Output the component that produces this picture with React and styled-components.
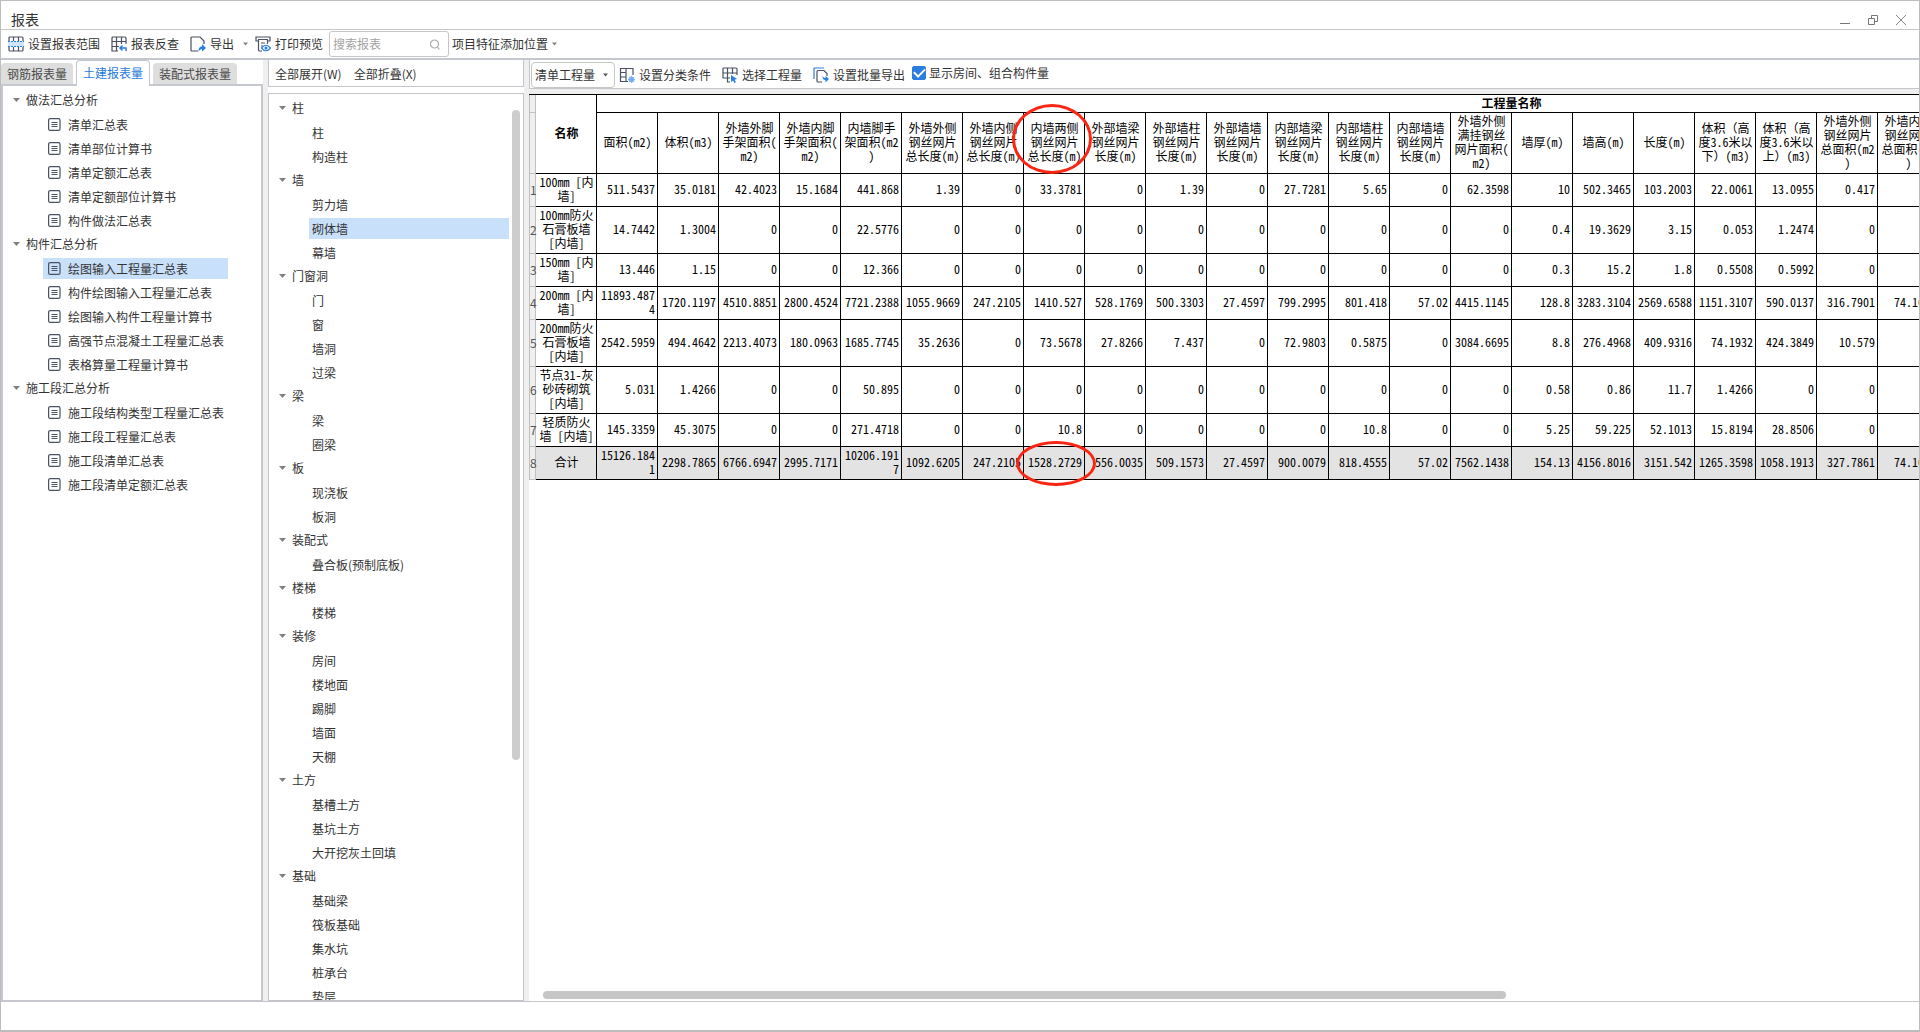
import { useState } from 'react';
import styled, { createGlobalStyle } from 'styled-components';

const reportGroups = [
    {
        title: '做法汇总分析',
        items: ['清单汇总表', '清单部位计算书', '清单定额汇总表', '清单定额部位计算书', '构件做法汇总表'],
    },
    {
        title: '构件汇总分析',
        items: ['绘图输入工程量汇总表', '构件绘图输入工程量汇总表', '绘图输入构件工程量计算书', '高强节点混凝土工程量汇总表', '表格算量工程量计算书'],
    },
    {
        title: '施工段汇总分析',
        items: ['施工段结构类型工程量汇总表', '施工段工程量汇总表', '施工段清单汇总表', '施工段清单定额汇总表'],
    },
];

const componentGroups = [
    { title: '柱', items: ['柱', '构造柱'] },
    { title: '墙', items: ['剪力墙', '砌体墙', '幕墙'] },
    { title: '门窗洞', items: ['门', '窗', '墙洞', '过梁'] },
    { title: '梁', items: ['梁', '圈梁'] },
    { title: '板', items: ['现浇板', '板洞'] },
    { title: '装配式', items: ['叠合板(预制底板)'] },
    { title: '楼梯', items: ['楼梯'] },
    { title: '装修', items: ['房间', '楼地面', '踢脚', '墙面', '天棚'] },
    { title: '土方', items: ['基槽土方', '基坑土方', '大开挖灰土回填'] },
    { title: '基础', items: ['基础梁', '筏板基础', '集水坑', '桩承台', '垫层'] },
];

const columns = [
    '面积(m2)', '体积(m3)', '外墙外脚手架面积(m2)', '外墙内脚手架面积(m2)', '内墙脚手架面积(m2)',
    '外墙外侧钢丝网片总长度(m)', '外墙内侧钢丝网片总长度(m)', '内墙两侧钢丝网片总长度(m)',
    '外部墙梁钢丝网片长度(m)', '外部墙柱钢丝网片长度(m)', '外部墙墙钢丝网片长度(m)',
    '内部墙梁钢丝网片长度(m)', '内部墙柱钢丝网片长度(m)', '内部墙墙钢丝网片长度(m)',
    '外墙外侧满挂钢丝网片面积(m2)', '墙厚(m)', '墙高(m)', '长度(m)',
    '体积（高度3.6米以下）(m3)', '体积（高度3.6米以上）(m3)', '外墙外侧钢丝网片总面积(m2)', '外墙内侧钢丝网片总面积(m2)',
];

// the sheet is wider than the window, the last columns stay empty
const totalColumns = 30;

const rows = [
    { name: '100mm [内墙]', values: ['511.5437', '35.0181', '42.4023', '15.1684', '441.868', '1.39', '0', '33.3781', '0', '1.39', '0', '27.7281', '5.65', '0', '62.3598', '10', '502.3465', '103.2003', '22.0061', '13.0955', '0.417', '0'] },
    { name: '100mm防火石膏板墙 [内墙]', values: ['14.7442', '1.3004', '0', '0', '22.5776', '0', '0', '0', '0', '0', '0', '0', '0', '0', '0', '0.4', '19.3629', '3.15', '0.053', '1.2474', '0', '0'] },
    { name: '150mm [内墙]', values: ['13.446', '1.15', '0', '0', '12.366', '0', '0', '0', '0', '0', '0', '0', '0', '0', '0', '0.3', '15.2', '1.8', '0.5508', '0.5992', '0', '0'] },
    { name: '200mm [内墙]', values: ['11893.4874', '1720.1197', '4510.8851', '2800.4524', '7721.2388', '1055.9669', '247.2105', '1410.527', '528.1769', '500.3303', '27.4597', '799.2995', '801.418', '57.02', '4415.1145', '128.8', '3283.3104', '2569.6588', '1151.3107', '590.0137', '316.7901', '74.1633'] },
    { name: '200mm防火石膏板墙 [内墙]', values: ['2542.5959', '494.4642', '2213.4073', '180.0963', '1685.7745', '35.2636', '0', '73.5678', '27.8266', '7.437', '0', '72.9803', '0.5875', '0', '3084.6695', '8.8', '276.4968', '409.9316', '74.1932', '424.3849', '10.579', '0'] },
    { name: '节点31-灰砂砖砌筑 [内墙]', values: ['5.031', '1.4266', '0', '0', '50.895', '0', '0', '0', '0', '0', '0', '0', '0', '0', '0', '0.58', '0.86', '11.7', '1.4266', '0', '0', '0'] },
    { name: '轻质防火墙 [内墙]', values: ['145.3359', '45.3075', '0', '0', '271.4718', '0', '0', '10.8', '0', '0', '0', '0', '10.8', '0', '0', '5.25', '59.225', '52.1013', '15.8194', '28.8506', '0', '0'] },
    { name: '合计', total: true, values: ['15126.1841', '2298.7865', '6766.6947', '2995.7171', '10206.1917', '1092.6205', '247.2105', '1528.2729', '556.0035', '509.1573', '27.4597', '900.0079', '818.4555', '57.02', '7562.1438', '154.13', '4156.8016', '3151.542', '1265.3598', '1058.1913', '327.7861', '74.1633'] },
];

const GlobalStyle = createGlobalStyle`
    * {
        box-sizing: border-box;
    }
    body {
        margin: 0;
        background: #fff;
        color: #333;
        font-family: 'Noto Sans CJK SC', sans-serif;
        font-size: 12px;
        line-height: 20px;
        overflow: hidden;
    }
    button, input, select {
        font: inherit;
        color: inherit;
        margin: 0;
        padding: 0;
        border: 0;
        background: none;
    }
    ul {
        list-style: none;
        margin: 0;
        padding: 0;
    }
`;

const Window = styled.div`
    display: flex;
    flex-direction: column;
    height: 100vh;
    border: 1px solid #bdbdbd;
    border-bottom-width: 2px;
`;

const TitleBar = styled.header`
    display: flex;
    align-items: flex-end;
    justify-content: space-between;
    height: 29px;
    padding: 0 13px 0 10px;
    border-bottom: 1px solid #c4c6c9;
`;

const Title = styled.h1`
    margin: 0;
    font-size: 14px;
    font-weight: 400;
    line-height: 20px;
`;

const WindowButtons = styled.div`
    display: flex;
    gap: 18px;
    padding-bottom: 4px;
    button {
        display: flex;
        width: 10px;
        height: 10px;
    }
`;

const Toolbar = styled.div`
    display: flex;
    align-items: center;
    height: 30px;
    padding-left: 7px;
    border-bottom: 2px solid #c4c8ce;
`;

const ToolButton = styled.button`
    display: flex;
    align-items: center;
    gap: 4px;
    margin-right: ${({ $space }) => $space || 11}px;
    white-space: nowrap;
    svg {
        flex: none;
    }
`;

const CaretButton = styled.button`
    display: flex;
    margin-right: 7px;
`;

const SearchBox = styled.label`
    display: flex;
    align-items: center;
    width: 120px;
    height: 26px;
    margin-right: 3px;
    padding: 0 8px 0 3px;
    border: 1px solid #c6c6c6;
    border-radius: 3px;
    input {
        flex: 1;
        min-width: 0;
        outline: none;
    }
    input::placeholder {
        color: #a3a3a3;
        opacity: 1;
    }
`;

const Main = styled.main`
    flex: 1;
    min-height: 0;
    display: grid;
    grid-template-columns: 262px 256px minmax(0, 1fr);
    grid-template-rows: minmax(0, 1fr);
    column-gap: 5px;
    background: #efefef;
`;

const Column = styled.section`
    display: flex;
    flex-direction: column;
    min-height: 0;
    background: #fff;
`;

const Tabs = styled.div`
    display: flex;
    align-items: flex-end;
    gap: 3px;
    height: 24px;
`;

const Tab = styled.button`
    height: ${({ $active }) => ($active ? 26 : 21)}px;
    margin-bottom: ${({ $active }) => ($active ? -2 : 0)}px;
    padding: ${({ $active }) => ($active ? '0 6px 2px' : '0 6px')};
    border-radius: 4px 4px 0 0;
    border: ${({ $active }) => ($active ? '1px solid #c4c8ce' : '0')};
    border-bottom: 0;
    background: ${({ $active }) => ($active ? '#fff' : '#dedede')};
    color: ${({ $active }) => ($active ? '#1f7ae0' : '#4a4a4a')};
    white-space: nowrap;
    z-index: ${({ $active }) => ($active ? 1 : 0)};
`;

const ReportPanel = styled.nav`
    flex: 1;
    min-height: 0;
    padding-top: 3px;
    border: 2px solid #c6c8d0;
    border-bottom-width: 1px;
    overflow: hidden;
`;

const LinkBar = styled.div`
    display: flex;
    align-items: center;
    flex: none;
    gap: 12px;
    height: 27px;
    margin-bottom: 6px;
    padding: 2px 0 0 6px;
    border: 1px solid #c4c6cc;
    border-top: 0;
`;

const TreePanel = styled.nav`
    flex: 1;
    min-height: 0;
    display: flex;
    border: 1px solid #c4c6cc;
    overflow: hidden;
`;

const TreeArea = styled.div`
    flex: 1;
    padding-top: 3px;
`;

const TrackY = styled.div`
    width: 8px;
    margin: 16px 3px 0 0;
`;

const ThumbY = styled.div`
    height: 73%;
    border-radius: 4px;
    background: #cdcdcd;
`;

const GroupButton = styled.button`
    display: flex;
    align-items: center;
    gap: 6px;
    height: 24px;
    padding: 0 0 2px 10px;
`;

const TreeRow = styled.li`
    display: flex;
    height: 24px;
    padding: 1px 0 2px 40px;
`;

const TreeItem = styled.button`
    display: flex;
    align-items: center;
    gap: 7px;
    width: ${({ $width }) => $width}px;
    padding-left: ${({ $indent }) => $indent}px;
    background: ${({ $active }) => ($active ? '#c9e0fa' : 'transparent')};
    white-space: nowrap;
`;

const SheetToolbar = styled.div`
    display: flex;
    align-items: center;
    flex: none;
    height: 29px;
    padding: 1px 0 0 1px;
    border-left: 1px solid #c4c6cc;
    border-bottom: 1px solid #c4c6cc;
`;

const SelectBox = styled.label`
    display: grid;
    align-items: center;
    width: 84px;
    height: 26px;
    margin-right: 4px;
    border: 1px solid #c6c6c6;
    border-radius: 4px;
    select {
        grid-area: 1 / 1;
        width: 100%;
        height: 24px;
        padding-left: 3px;
        appearance: none;
        outline: none;
    }
    svg {
        grid-area: 1 / 1;
        justify-self: end;
        margin-right: 6px;
        pointer-events: none;
    }
`;

const CheckLabel = styled.label`
    display: flex;
    align-items: center;
    gap: 3px;
    padding-bottom: 3px;
    white-space: nowrap;
`;

const Checkbox = styled.input`
    display: grid;
    place-items: center;
    width: 14px;
    height: 14px;
    border: 1px solid #2a7de1;
    border-radius: 2px;
    appearance: none;
    &:checked {
        background: #2a7de1;
    }
    &:checked::after {
        content: '';
        width: 9px;
        height: 5px;
        margin-bottom: 3px;
        border: solid #fff;
        border-width: 0 0 2px 2px;
        transform: rotate(-45deg);
    }
`;

const SheetArea = styled.div`
    position: relative;
    flex: 1;
    min-height: 0;
    border-top: 5px solid #efefef;
    overflow: hidden;
`;

const Sheet = styled.table`
    width: 1898px;
    table-layout: fixed;
    border-collapse: separate;
    border-spacing: 0;
    border-top: 1px solid #000;
    color: #000;
    font-size: 12px;
    line-height: 14px;
    word-break: break-all;
    line-break: anywhere;
`;

const Cell = styled.td`
    padding: 1px 2px 3px;
    border-right: 1px solid #000;
    border-bottom: 1px solid #000;
    text-align: right;
    vertical-align: middle;
    background: ${({ $total }) => ($total ? '#e3e3e3' : '#fff')};
`;

const HeadCell = styled(Cell)`
    padding: 1px 1px 3px 2px;
    font-weight: ${({ $bold }) => ($bold ? 700 : 400)};
    text-align: center;
`;

const TitleCell = styled(HeadCell)`
    height: 18px;
    padding: 0 0 2px;
`;

const IndexCell = styled.th`
    padding: 0;
    border: solid #c0c0c0;
    border-width: 0 1px 1px;
    background: #efefef;
    color: #555;
    font-weight: 400;
    text-align: center;
`;

const Half = styled.span`
    font-family: 'Noto Sans Mono CJK SC', 'DejaVu Sans Mono', monospace;
    line-height: 1;
`;

const Mark = styled.div`
    position: absolute;
    top: ${({ $top }) => $top}px;
    left: ${({ $left }) => $left}px;
    width: 80px;
    height: ${({ $height }) => $height}px;
    border: 3px solid #fb2513;
    border-radius: 50%;
    pointer-events: none;
`;

const TrackX = styled.div`
    flex: none;
    height: 8px;
    margin: 0 0 2px 14px;
`;

const ThumbX = styled.div`
    width: 70%;
    height: 8px;
    border-radius: 4px;
    background: #c6c6c6;
`;

const Footer = styled.footer`
    height: 29px;
    border-top: 1px solid #c4c6c9;
`;

const Caret = ({ size = 7, color = '#808080' }) => (
    <svg width={size} height="4" viewBox="0 0 7 4">
        <path d="M0 0h7L3.5 4z" fill={color} />
    </svg>
);

const Icon = ({ children }) => (
    <svg width="16" height="16" viewBox="0 0 16 16" fill="none" stroke="#4a5163" strokeWidth="1.2">
        {children}
    </svg>
);

const RangeIcon = () => (
    <Icon>
        <path d="M1 5V2Q1 1 2 1H14Q15 1 15 2V5M5.5 1v4M10.5 1v4M1 11v3Q1 15 2 15H14Q15 15 15 14V11M5.5 11v4M10.5 11v4" />
        <path d="M0 5.5h16v5H0z" fill="#cfe3fb" stroke="none" />
        <path d="M0 5.5h16M0 10.5h16" stroke="#2a7de1" strokeDasharray="2 1" />
    </Icon>
);

const TraceIcon = () => (
    <Icon>
        <path d="M7 15H1V2Q1 1 2 1H14Q15 1 15 2V8M1 5.5h14M1 10.5h7M5.5 1v14M10.5 1v7" />
        <path d="M15 15v-3H9M11.5 9.5L9 12l2.5 2.5" stroke="#2a7de1" strokeWidth="1.5" />
    </Icon>
);

const ExportIcon = () => (
    <Icon>
        <path d="M8 15H2Q1 15 1 14V2Q1 1 2 1H10L14 5V8" />
        <path d="M8.5 15.5q0-5 3.5-5V8l4 4-4 3.500V13q-2 0-3.500 2.500z" fill="#2a7de1" stroke="none" />
    </Icon>
);

const PreviewIcon = () => (
    <Icon>
        <path d="M3 5H1V1H15V5H13M3 3.500H13M3.500 3.500V14Q3.500 15 5 15H7M12.500 3.500V8M6 7h4M6 10h2" />
        <path d="M6.500 12q4.500-5.500 9 0q-4.500 5.500-9 0z" fill="#fff" stroke="#2a7de1" />
        <circle cx="11" cy="12" r="1.500" fill="#2a7de1" stroke="none" />
    </Icon>
);

const ClassifyIcon = () => (
    <Icon>
        <path d="M9 14.500H1.500V1.500H14V8M7 1.500v13M1.500 5.500H7M1.500 10H7" />
        <circle cx="12.500" cy="12.500" r="3" fill="#8fbdf3" stroke="none" />
        <path d="M12.500 9v7M9 12.500h7M10 10l5 5M15 10l-5 5" stroke="#6ea8ee" strokeWidth="0.800" />
    </Icon>
);

const PickIcon = () => (
    <Icon>
        <path d="M8 15H5.500V1M1 11V2Q1 1 2 1H14Q15 1 15 2V8M1 6h14M10.500 1v6M0.500 11H8" />
        <path d="M9 8l6 4-2.500.8L14 15l-1.500 1-1.500-2.500L9 15z" fill="#2a7de1" stroke="none" />
    </Icon>
);

const BatchIcon = () => (
    <Icon>
        <path d="M1 12V2Q1 1 2 1H11" stroke="#2a7de1" />
        <path d="M9 15H5Q4 15 4 14V4.500Q4 3.500 5 3.500H11L14 6.500V9" />
        <path d="M9.500 9q0 4 3 4v2.500l3.500-3.500-3.500-3V11q-2 0-3-2z" fill="#2a7de1" stroke="none" />
    </Icon>
);

const DocIcon = () => (
    <svg width="13" height="13" viewBox="0 0 13 13" fill="none" stroke="#4a5163">
        <rect x="0.600" y="0.600" width="11.400" height="11.800" rx="1.500" strokeWidth="1.200" />
        <path d="M3.500 4.500h6M3.500 6.500h6M3.500 8.500h6" />
    </svg>
);

// latin runs are set half as wide as the Chinese ones
const Mixed = ({ text }) => text.split(/([\x20-\x7e]+)/).filter(Boolean).map((part, i) => (
    /^[\x20-\x7e]/.test(part) ? <Half key={i}>{part}</Half> : part
));

const Tree = ({ groups, icon, indent, width, active, onSelect }) => (
    <ul>
        {groups.map((group) => (
            <li key={group.title}>
                <GroupButton type="button"><Caret />{group.title}</GroupButton>
                <ul>
                    {group.items.map((item) => (
                        <TreeRow key={item}>
                            <TreeItem
                                type="button"
                                $indent={indent}
                                $width={width}
                                $active={item === active}
                                onClick={() => onSelect(item)}
                            >
                                {icon}{item}
                            </TreeItem>
                        </TreeRow>
                    ))}
                </ul>
            </li>
        ))}
    </ul>
);

const QuantityTable = () => (
    <Sheet>
        <colgroup>
            <col style={{ width: 7 }} />
            {Array.from({ length: totalColumns + 1 }, (_, i) => <col key={i} style={{ width: 61 }} />)}
        </colgroup>
        <thead>
            <tr>
                <IndexCell />
                <HeadCell as="th" rowSpan={2} $bold>名称</HeadCell>
                <TitleCell as="th" colSpan={totalColumns} $bold>工程量名称</TitleCell>
            </tr>
            <tr>
                <IndexCell />
                {columns.map((title) => <HeadCell as="th" key={title}><Mixed text={title} /></HeadCell>)}
            </tr>
        </thead>
        <tbody>
            {rows.map((row, i) => (
                <tr key={row.name}>
                    <IndexCell>{i + 1}</IndexCell>
                    <HeadCell as="th" $total={row.total}><Mixed text={row.name} /></HeadCell>
                    {row.values.map((value, n) => (
                        <Cell key={columns[n]} $total={row.total}><Half>{value}</Half></Cell>
                    ))}
                </tr>
            ))}
        </tbody>
    </Sheet>
);

const App = () => {
    const [tab, setTab] = useState('土建报表量');
    const [report, setReport] = useState('绘图输入工程量汇总表');
    const [component, setComponent] = useState('砌体墙');
    const [showRooms, setShowRooms] = useState(true);

    return (
        <Window>
            <GlobalStyle />
            <TitleBar>
                <Title>报表</Title>
                <WindowButtons>
                    <button type="button" aria-label="最小化">
                        <svg width="10" height="10" stroke="#777"><path d="M0 8.500h10" /></svg>
                    </button>
                    <button type="button" aria-label="还原">
                        <svg width="10" height="10" stroke="#777" fill="none"><path d="M0.500 3.500h6v6h-6zM3.500 3.500v-3h6v6h-3" /></svg>
                    </button>
                    <button type="button" aria-label="关闭">
                        <svg width="10" height="10" stroke="#888"><path d="M0 0l10 10M10 0L0 10" /></svg>
                    </button>
                </WindowButtons>
            </TitleBar>
            <Toolbar>
                <ToolButton type="button"><RangeIcon />设置报表范围</ToolButton>
                <ToolButton type="button"><TraceIcon />报表反查</ToolButton>
                <ToolButton type="button" $space={9}><ExportIcon />导出</ToolButton>
                <CaretButton type="button" aria-label="导出选项"><Caret size={5} /></CaretButton>
                <ToolButton type="button" $space={6}><PreviewIcon />打印预览</ToolButton>
                <SearchBox>
                    <input type="text" placeholder="搜索报表" aria-label="搜索报表" />
                    <svg width="10" height="11" viewBox="0 0 10 11" fill="none" stroke="#aaa" strokeWidth="1.200">
                        <circle cx="4.500" cy="5" r="4" />
                        <path d="M7.500 8l2 2.500" />
                    </svg>
                </SearchBox>
                <ToolButton type="button">项目特征添加位置<Caret size={5} /></ToolButton>
            </Toolbar>
            <Main>
                <Column>
                    <Tabs>
                        {['钢筋报表量', '土建报表量', '装配式报表量'].map((name) => (
                            <Tab key={name} type="button" $active={name === tab} onClick={() => setTab(name)}>{name}</Tab>
                        ))}
                    </Tabs>
                    <ReportPanel>
                        <Tree groups={reportGroups} icon={<DocIcon />} indent={5} width={185} active={report} onSelect={setReport} />
                    </ReportPanel>
                </Column>
                <Column>
                    <LinkBar>
                        <button type="button">全部展开(W)</button>
                        <button type="button">全部折叠(X)</button>
                    </LinkBar>
                    <TreePanel>
                        <TreeArea>
                            <Tree groups={componentGroups} indent={3} width={200} active={component} onSelect={setComponent} />
                        </TreeArea>
                        <TrackY><ThumbY /></TrackY>
                    </TreePanel>
                </Column>
                <Column>
                    <SheetToolbar>
                        <SelectBox>
                            <select aria-label="工程量类型">
                                <option>清单工程量</option>
                            </select>
                            <Caret size={5} color="#555" />
                        </SelectBox>
                        <ToolButton type="button"><ClassifyIcon />设置分类条件</ToolButton>
                        <ToolButton type="button"><PickIcon />选择工程量</ToolButton>
                        <ToolButton type="button" $space={7}><BatchIcon />设置批量导出</ToolButton>
                        <CheckLabel>
                            <Checkbox type="checkbox" checked={showRooms} onChange={() => setShowRooms((v) => !v)} />
                            显示房间、组合构件量
                        </CheckLabel>
                    </SheetToolbar>
                    <SheetArea>
                        <QuantityTable />
                        <Mark $top={10} $left={483} $height={70} />
                        <Mark $top={347} $left={487} $height={45} />
                    </SheetArea>
                    <TrackX><ThumbX /></TrackX>
                </Column>
            </Main>
            <Footer />
        </Window>
    );
};

export default App;
